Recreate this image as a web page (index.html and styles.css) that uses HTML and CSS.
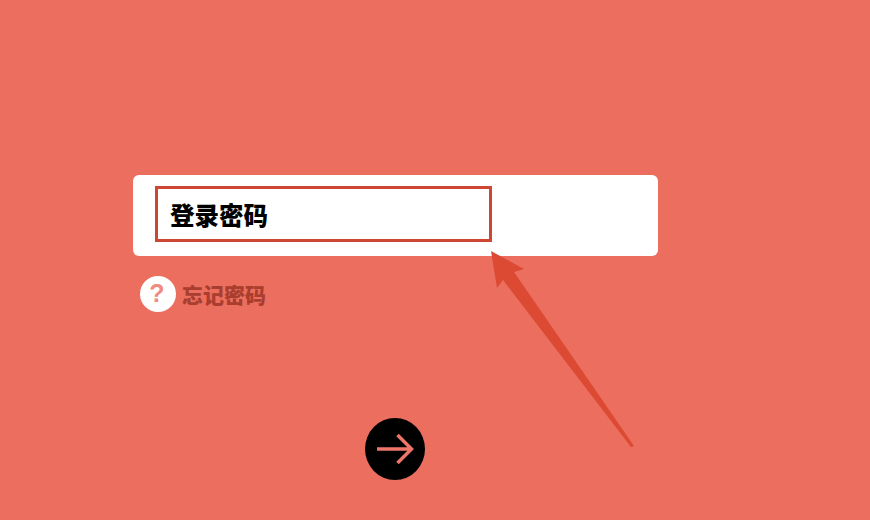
FILE: index.html
```html
<!DOCTYPE html>
<html lang="zh-CN">
<head>
    <meta charset="UTF-8">
    <meta name="viewport" content="width=device-width, initial-scale=1.0">
    <title>登录密码</title>
    <link rel="stylesheet" href="styles.css">
</head>
<body>
    <div class="page">
        <div class="card">
            <div class="password-box">登录密码</div>
        </div>
        <div class="forgot">
            <span class="forgot-icon">?</span>
            <span class="forgot-text">忘记密码</span>
        </div>
        <div class="next">
            <button class="next-btn" aria-label="next">
                <svg width="38" height="38" viewBox="0 0 38 38">
                    <path d="M1 19H36M21.500 5L35.500 19L21.500 33" fill="none" stroke="#ee7668" stroke-width="3.500"/>
                </svg>
            </button>
        </div>
    </div>

    <!-- annotation arrow on top of the screenshot -->
    <svg class="annotation" width="870" height="520" viewBox="0 0 870 520">
        <path d="M491 251L524 269L514 272L634 446L631 447L503 280L497 288Z" fill="#dc4a34"/>
    </svg>
</body>
</html>
```

FILE: styles.css
```css
body {
    margin: 0;
    background-color: #eb6e5f;
    font-family: "Liberation Sans", "Noto Sans CJK SC", sans-serif;
}

.page {
    width: 870px;
    height: 520px;
    padding: 175px 0 0 133px;
    box-sizing: border-box;
    overflow: hidden;
}

.card {
    width: 525px;
    height: 81px;
    padding: 11px 0 0 22px;
    box-sizing: border-box;
    background-color: #fff;
    border-radius: 6px;
}

.password-box {
    width: 337px;
    height: 56px;
    padding-left: 12px;
    box-sizing: border-box;
    border: 3px solid #cd4732;
    font-size: 24.500px;
    font-weight: 900;
    line-height: 56px;
    color: #000;
}

.forgot {
    display: flex;
    align-items: center;
    gap: 6px;
    margin: 20px 0 0 7px;
}

.forgot-icon {
    width: 36px;
    height: 36px;
    padding-right: 2px;
    box-sizing: border-box;
    border-radius: 50%;
    background-color: #fff;
    color: #ef8b7f;
    font-size: 25px;
    font-weight: bold;
    line-height: 35px;
    text-align: center;
}

.forgot-text {
    font-size: 21px;
    font-weight: 900;
    color: #a93d2e;
}

.next {
    display: flex;
    margin: 106px 0 0 232px;
}

.next-btn {
    display: flex;
    justify-content: center;
    align-items: center;
    width: 60px;
    height: 62px;
    padding: 0;
    border: none;
    border-radius: 50%;
    background-color: #000;
}

.annotation {
    position: absolute;
    top: 0;
    left: 0;
}
```
